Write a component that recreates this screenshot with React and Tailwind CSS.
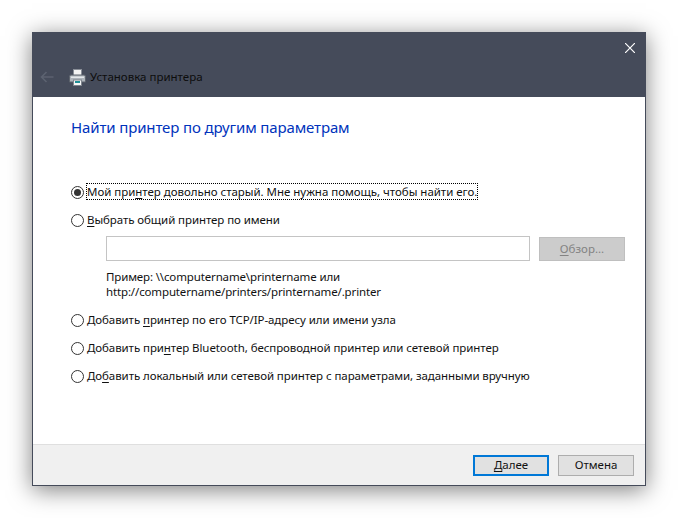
const U = ({ children }) => <span className="underline underline-offset-2 decoration-1">{children}</span>;

const Radio = ({ checked }) => (
    <span className="w-[13px] h-[13px] rounded-full border border-[#333333] bg-white flex items-center justify-center shrink-0">
        {checked && <span className="w-[7px] h-[7px] rounded-full bg-[#333333]" />}
    </span>
);

const Option = ({ checked, focused, children }) => (
    <div className="h-[28px] flex items-center">
        <Radio checked={checked} />
        <span className={`ml-[2px] mb-[1px] h-[17px] leading-[15px] whitespace-nowrap border border-dotted ${focused ? "border-black tracking-[-0.03px]" : "border-transparent tracking-[-0.08px]"}`}>
            {children}
        </span>
    </div>
);

const PrinterIcon = () => (
    <svg width="17" height="17" viewBox="0 0 17 17">
        <rect x="4.5" y="0.5" width="8" height="6" fill="#f4f4f4" stroke="#8a8f98" />
        <path d="M2 6h13a1.5 1.5 0 0 1 1.5 1.5V13h-16V7.5A1.5 1.5 0 0 1 2 6z" fill="#aeb4bb" stroke="#5d636c" />
        <rect x="2" y="7.5" width="13" height="1.5" fill="#e4e7ea" />
        <rect x="4.5" y="11" width="8" height="5.5" fill="#f7f7f7" stroke="#7f858e" />
        <rect x="6" y="12" width="5" height="2" fill="#1f8f96" />
    </svg>
);

const App = () => {
    return (
        <div className="w-[678px] h-[518px] bg-white pt-[32px] pl-[32px] overflow-hidden font-['Noto_Sans',sans-serif] text-[11.5px] text-[#111111]">
            <div className="w-[614px] h-[454px] flex flex-col bg-white border-x border-b border-[#454b5a] shadow-[0_4px_22px_rgba(0,0,0,0.5)]">
                <div className="h-[65px] bg-[#454b5a] flex flex-col -mx-px shrink-0">
                    <div className="h-[31px] flex justify-end items-center pr-[11px]">
                        <svg width="10" height="10" viewBox="0 0 10 10" stroke="#ffffff" strokeWidth="1.2">
                            <path d="M0 0L10 10M10 0L0 10" />
                        </svg>
                    </div>
                    <div className="flex items-center pl-[8px] h-[28px]">
                        <svg width="14" height="12" viewBox="0 0 14 12" fill="none" stroke="#5c6270" strokeWidth="1.6">
                            <path d="M13.5 6H1.5M6.5 1L1.5 6l5 5" />
                        </svg>
                        <span className="ml-[15px]"><PrinterIcon /></span>
                        <span className="ml-[4px] text-[#0d0d0d]">Установка принтера</span>
                    </div>
                </div>
                <div className="flex-1 pl-[38px] pr-[20px]">
                    <h1 className="mt-[19px] text-[15px] tracking-[-0.13px] leading-[22px] text-[#0033bc]">Найти принтер по другим параметрам</h1>
                    <div className="mt-[40px]">
                        <Option checked focused>Мой при<U>н</U>тер довольно старый. Мне нужна помощь, чтобы найти его.</Option>
                        <Option><U>В</U>ыбрать общий принтер по имени</Option>
                        <div className="pl-[35px] pt-[2px]">
                            <div className="flex items-center">
                                <div className="w-[424px] h-[25px] bg-white border border-[#c4c4c4]" />
                                <div className="ml-[9px] w-[86px] h-[24px] bg-[#cccccc] border border-[#bfbfbf] text-[#838383] flex items-center justify-center">
                                    <span><U>О</U>бзор...</span>
                                </div>
                            </div>
                            <p className="mt-[8px] leading-[15px] tracking-[-0.14px]">
                                Пример: \\computername\printername или<br />
                                http://computername/printers/printername/.printer
                            </p>
                        </div>
                        <div className="mt-[7px]">
                            <Option>Добавить <U>п</U>ринтер по его TCP/IP-адресу или имени узла</Option>
                            <Option>Добавить при<U>н</U>тер Bluetooth, беспроводной принтер или сетевой принтер</Option>
                            <Option>До<U>б</U>авить локальный или сетевой принтер с параметрами, заданными вручную</Option>
                        </div>
                    </div>
                </div>
                <div className="h-[41px] bg-[#f0f0f0] border-t border-[#dfdfdf] flex items-center justify-end pr-[11px] gap-[9px] shrink-0">
                    <div className="w-[76px] h-[21px] bg-[#e1e1e1] border-2 border-[#0078d7] flex items-center justify-center">
                        <span><U>Д</U>алее</span>
                    </div>
                    <div className="w-[76px] h-[21px] bg-[#e1e1e1] border border-[#adadad] flex items-center justify-center">
                        Отмена
                    </div>
                </div>
            </div>
        </div>
    );
};

export default App;
